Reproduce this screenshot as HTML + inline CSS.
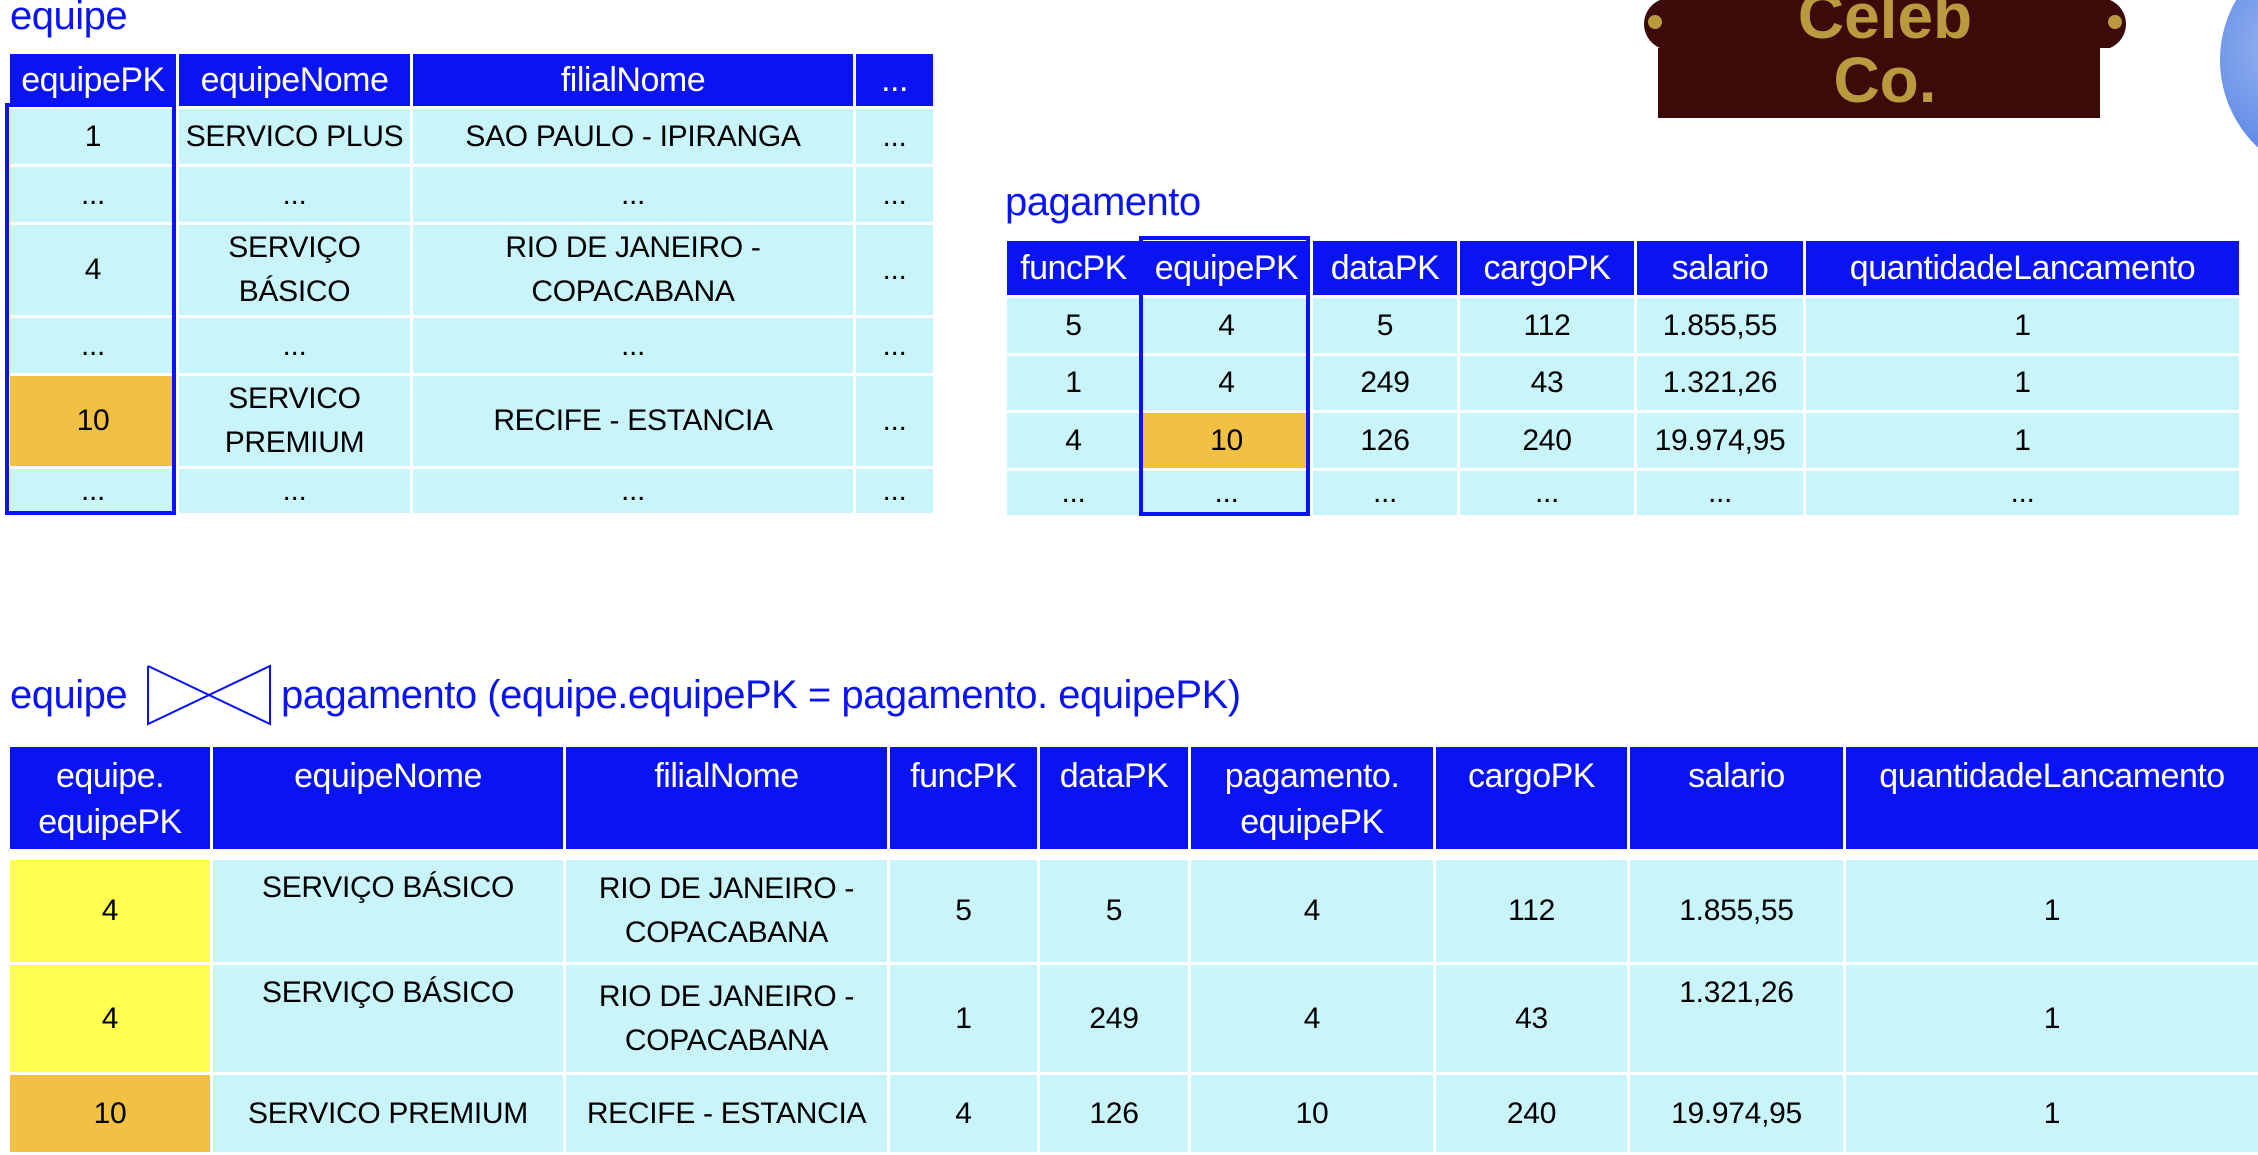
<!DOCTYPE html>
<html><head><meta charset="utf-8"><style>
body{margin:0;width:2258px;height:1152px;background:#fff;position:relative;overflow:hidden;font-family:"Liberation Sans",Arial,sans-serif;}
.t{position:absolute;border-collapse:collapse;table-layout:fixed;}
.t td{border:3px solid #fff;background:#c8f4fa;color:#000;text-align:center;vertical-align:middle;font-size:30px;padding:0;line-height:44px;letter-spacing:-0.3px}
.t td.h{background:#0a14f2;color:#fff;font-size:34px;letter-spacing:-0.5px;line-height:46px}
.t td.o{background:#f2c043}
.t td.y{background:#ffff50}
.ttl{position:absolute;color:#0a14f2;font-size:40px;letter-spacing:-0.5px;line-height:44px}
.box{position:absolute;border:4px solid #0a14f2;box-sizing:border-box}
.tp{vertical-align:top!important;padding-top:6px!important}
</style></head><body>

<div class="ttl" style="left:10px;top:-6px">equipe</div>
<table class="t" style="left:7px;top:51px;width:926px">
<colgroup><col style="width:169px"><col style="width:234px"><col style="width:443px"><col style="width:80px"></colgroup>
<tr style="height:55px"><td class="h">equipePK</td><td class="h">equipeNome</td><td class="h">filialNome</td><td class="h">...</td></tr>
<tr style="height:58px"><td>1</td><td>SERVICO PLUS</td><td>SAO PAULO - IPIRANGA</td><td>...</td></tr>
<tr style="height:58px"><td>...</td><td>...</td><td>...</td><td>...</td></tr>
<tr style="height:93px"><td>4</td><td>SERVIÇO<br>BÁSICO</td><td>RIO DE JANEIRO -<br>COPACABANA</td><td>...</td></tr>
<tr style="height:58px"><td>...</td><td>...</td><td>...</td><td>...</td></tr>
<tr style="height:93px"><td class="o">10</td><td>SERVICO<br>PREMIUM</td><td>RECIFE - ESTANCIA</td><td>...</td></tr>
<tr style="height:47px"><td>...</td><td>...</td><td>...</td><td>...</td></tr>
</table>
<div class="box" style="left:5px;top:103px;width:171px;height:412px"></div>

<div class="ttl" style="left:1005px;top:180px">pagamento</div>
<table class="t" style="left:1004px;top:238px;width:1235px">
<colgroup><col style="width:136px"><col style="width:170px"><col style="width:147px"><col style="width:177px"><col style="width:169px"><col style="width:436px"></colgroup>
<tr style="height:57px"><td class="h">funcPK</td><td class="h">equipePK</td><td class="h">dataPK</td><td class="h">cargoPK</td><td class="h">salario</td><td class="h">quantidadeLancamento</td></tr>
<tr style="height:58px"><td>5</td><td>4</td><td>5</td><td>112</td><td>1.855,55</td><td>1</td></tr>
<tr style="height:57px"><td>1</td><td>4</td><td>249</td><td>43</td><td>1.321,26</td><td>1</td></tr>
<tr style="height:58px"><td>4</td><td class="o">10</td><td>126</td><td>240</td><td>19.974,95</td><td>1</td></tr>
<tr style="height:46px"><td>...</td><td>...</td><td>...</td><td>...</td><td>...</td><td>...</td></tr>
</table>
<div class="box" style="left:1139px;top:236px;width:171px;height:280px"></div>

<svg style="position:absolute;left:1630px;top:0" width="510" height="120" viewBox="0 0 510 120">
<path d="M30 0 H480 A26 26 0 0 1 480 48 H470 V118 H28 V48 H30 A26 26 0 0 1 30 0 Z" fill="#3c0a08"/>
<circle cx="25" cy="22" r="7" fill="#b99a3e"/><circle cx="485" cy="22" r="7" fill="#b99a3e"/>
<text x="255" y="38" text-anchor="middle" font-family="Liberation Sans" font-weight="bold" font-size="64" fill="#b99a3e">Celeb</text>
<text x="255" y="102" text-anchor="middle" font-family="Liberation Sans" font-weight="bold" font-size="64" fill="#b99a3e">Co.</text>
</svg>
<div style="position:absolute;left:2220px;top:-60px;width:240px;height:240px;border-radius:50%;background:radial-gradient(circle at 30% 45%,#9db8f0,#5a86e6 55%,#e8eefb 100%)"></div>

<div class="ttl" style="left:10px;top:673px">equipe</div>
<svg style="position:absolute;left:146px;top:664px" width="126" height="62"><path d="M2 2 V60 L124 2 V60 L2 2" fill="none" stroke="#0a14f2" stroke-width="2"/></svg>
<div class="ttl" style="left:281px;top:673px">pagamento (equipe.equipePK = pagamento. equipePK)</div>

<table class="t" style="left:7px;top:744px;width:2251px">
<colgroup><col style="width:203px"><col style="width:353px"><col style="width:324px"><col style="width:150px"><col style="width:151px"><col style="width:245px"><col style="width:194px"><col style="width:216px"><col style="width:415px"></colgroup>
<tr style="height:105px"><td class="h tp">equipe.<br>equipePK</td><td class="h tp">equipeNome</td><td class="h tp">filialNome</td><td class="h tp">funcPK</td><td class="h tp">dataPK</td><td class="h tp">pagamento.<br>equipePK</td><td class="h tp">cargoPK</td><td class="h tp">salario</td><td class="h tp">quantidadeLancamento</td></tr>
</table>
<table class="t" style="left:7px;top:857px;width:2251px">
<colgroup><col style="width:203px"><col style="width:353px"><col style="width:324px"><col style="width:150px"><col style="width:151px"><col style="width:245px"><col style="width:194px"><col style="width:216px"><col style="width:415px"></colgroup>
<tr style="height:105px"><td class="y">4</td><td class="tp">SERVIÇO BÁSICO</td><td>RIO DE JANEIRO -<br>COPACABANA</td><td>5</td><td>5</td><td>4</td><td>112</td><td>1.855,55</td><td>1</td></tr>
<tr style="height:110px"><td class="y">4</td><td class="tp">SERVIÇO BÁSICO</td><td>RIO DE JANEIRO -<br>COPACABANA</td><td>1</td><td>249</td><td>4</td><td>43</td><td class="tp">1.321,26</td><td>1</td></tr>
<tr style="height:80px"><td class="o">10</td><td>SERVICO PREMIUM</td><td>RECIFE - ESTANCIA</td><td>4</td><td>126</td><td>10</td><td>240</td><td>19.974,95</td><td>1</td></tr>
</table>
</body></html>
